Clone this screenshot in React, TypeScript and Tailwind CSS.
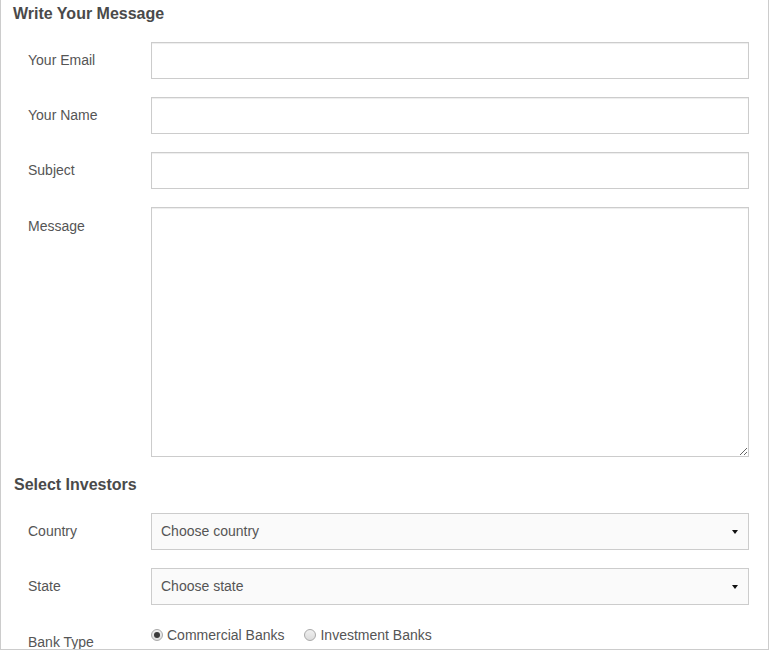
import React from 'react';

const inputCls =
  'flex-1 h-[37px] border border-[#ccc] bg-white shadow-[inset_0_1px_1px_rgba(0,0,0,0.075)] outline-none px-[9px] text-[14px] text-[#555]';

function Row({ label, children }: { label: string; children: React.ReactNode }) {
  return (
    <div className="flex h-[37px] mb-[18px]">
      <label className="w-[138px] pl-[15px] flex items-center text-[14px] text-[#555]">{label}</label>
      {children}
    </div>
  );
}

function SelectBox({ text }: { text: string }) {
  return (
    <div className="flex-1 h-[37px] border border-[#ccc] bg-[#fafafa] flex items-center justify-between pl-[9px] pr-[9px] text-[14px] text-[#555]">
      <span>{text}</span>
      <span className="w-0 h-0 border-l-[3px] border-r-[3px] border-t-[4px] border-l-transparent border-r-transparent border-t-[#111] mr-[1px]" />
    </div>
  );
}

function Radio({ checked, label }: { checked?: boolean; label: string }) {
  return (
    <span className="flex items-center gap-[4px] text-[14px] text-[#555]">
      <span className="w-[12px] h-[12px] rounded-full border border-[#a9a9a9] bg-gradient-to-b from-[#f0f0f0] to-[#dcdcdc] flex items-center justify-center">
        {checked && <span className="w-[6px] h-[6px] rounded-full bg-[#3a3a3a]" />}
      </span>
      {label}
    </span>
  );
}

export default function App() {
  return (
    <div className="w-[769px] h-[650px] border-l border-r border-b border-[#ccc] pl-[12px] pr-[19px] bg-white font-['Liberation_Sans',Arial,sans-serif] overflow-hidden">
      <h2 className="mt-[4px] h-[20px] leading-[20px] text-[16px] font-bold text-[#4a4a4a]">Write Your Message</h2>
      <div className="mt-[18px]">
        <Row label="Your Email">
          <input className={inputCls} />
        </Row>
        <Row label="Your Name">
          <input className={inputCls} />
        </Row>
        <Row label="Subject">
          <input className={inputCls} />
        </Row>
        <div className="flex h-[250px]">
          <label className="w-[138px] pl-[15px] pt-[9px] text-[14px] text-[#555]">Message</label>
          <textarea className={inputCls + ' h-[250px] resize-y'} />
        </div>
      </div>
      <h2 className="mt-[18px] h-[20px] leading-[20px] text-[16px] font-bold text-[#4a4a4a] pl-[1px]">Select Investors</h2>
      <div className="mt-[18px]">
        <Row label="Country">
          <SelectBox text="Choose country" />
        </Row>
        <Row label="State">
          <SelectBox text="Choose state" />
        </Row>
        <div className="flex pt-[1px]">
          <label className="w-[138px] pl-[15px] pt-[8px] leading-[20px] text-[14px] text-[#555]">Bank Type</label>
          <div className="flex items-center h-[20px] gap-[20px] mt-[1px]">
            <Radio checked label="Commercial Banks" />
            <Radio label="Investment Banks" />
          </div>
        </div>
      </div>
    </div>
  );
}
